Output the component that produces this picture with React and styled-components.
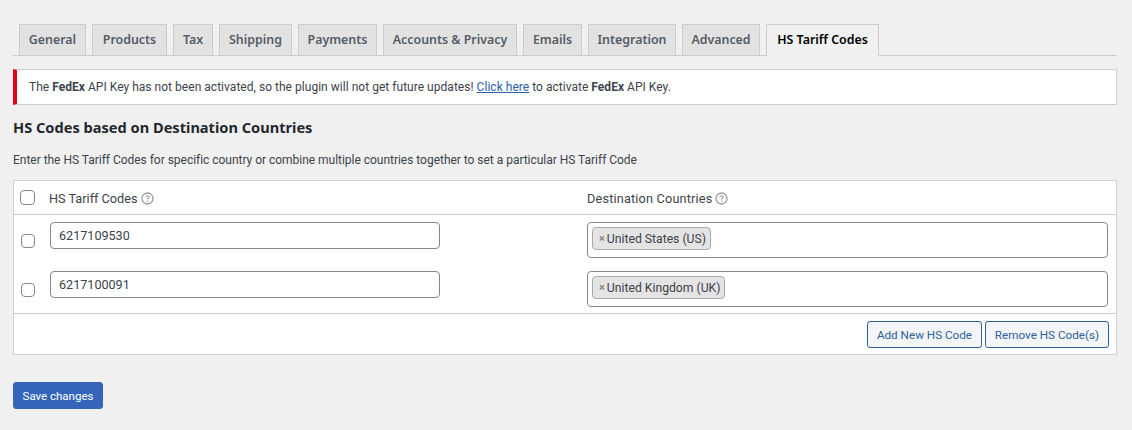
import React from 'react';
import styled, { createGlobalStyle } from 'styled-components';

const GlobalStyle = createGlobalStyle`
  html, body {
    margin: 0;
    background: #f0f0f1;
    color: #3c434a;
    font-family: Roboto, "Noto Sans", sans-serif;
    font-size: 12px;
  }
`;

const Page = styled.div`
  width: 1132px;
  height: 430px;
  box-sizing: border-box;
  padding: 24px 15px 0 13px;
  overflow: hidden;
`;

const TabBar = styled.div`
  display: flex;
  gap: 6px;
  height: 32px;
  box-sizing: border-box;
  padding-left: 6px;
  border-bottom: 1px solid #ccc;
`;

const Tab = styled.a`
  box-sizing: border-box;
  width: ${p => p.$width}px;
  height: ${p => (p.$active ? 32 : 31)}px;
  padding-bottom: ${p => (p.$active ? 2 : 1)}px;
  display: flex;
  align-items: center;
  justify-content: center;
  border: 1px solid #ccc;
  border-bottom: 0;
  background: ${p => (p.$active ? '#f0f0f1' : '#e2e2e2')};
  color: ${p => (p.$active ? '#000' : '#555d66')};
  font-family: "Noto Sans", sans-serif;
  font-size: 12.4px;
  font-weight: 600;
  white-space: nowrap;
`;

const Notice = styled.div`
  box-sizing: border-box;
  height: 36px;
  margin-top: 13px;
  padding-left: 12px;
  display: flex;
  align-items: center;
  background: #fff;
  border: 1px solid #ccd0d4;
  border-left: 4px solid #e2001a;
  color: #3c434a;
  font-size: 12px;
  letter-spacing: 0.03px;
  white-space: pre;
`;

const Link = styled.a`
  color: #2b62ae;
  text-decoration: underline;
`;

const Heading = styled.h2`
  margin: 12px 0 0;
  color: #23282d;
  font-family: "Noto Sans", sans-serif;
  font-size: 14.6px;
  line-height: 20px;
  font-weight: 700;
`;

const Intro = styled.p`
  margin: 13px 0 0;
  font-size: 12px;
  line-height: 20px;
  letter-spacing: -0.025px;
`;

const Panel = styled.div`
  margin-top: 10px;
  height: 175px;
  box-sizing: border-box;
  background: #fff;
  border: 1px solid #ccd0d4;
`;

const HeaderRow = styled.div`
  display: grid;
  grid-template-columns: 35px 538px 1fr;
  height: 34px;
  box-sizing: border-box;
  align-items: center;
  border-bottom: 1px solid #ccd0d4;
`;

const Row = styled.div`
  display: grid;
  grid-template-columns: 36px 537px 1fr;
  box-sizing: border-box;
  height: ${p => (p.$first ? 56 : 42)}px;
  padding-top: ${p => (p.$first ? 7 : 0)}px;
`;

const Check = styled.input.attrs({ type: 'checkbox' })`
  appearance: none;
  margin: ${p => (p.$head ? '0 0 0 6px' : '12px 0 0 7px')};
  width: ${p => (p.$head ? 15 : 14)}px;
  height: ${p => (p.$head ? 15 : 14)}px;
  background: #fff;
  border: 1px solid #7e8993;
  border-radius: 4px;
`;

const ColumnTitle = styled.div`
  display: flex;
  align-items: center;
  gap: 3px;
  color: #3c434a;
  font-size: 12.7px;
  letter-spacing: ${p => (p.$wide ? 0.18 : 0)}px;
  padding-top: 2px;
`;

const TextInput = styled.input`
  box-sizing: border-box;
  display: block;
  width: 390px;
  height: 27px;
  padding: 0 8px;
  border: 1px solid #7e8993;
  border-radius: 4px;
  background: #fff;
  color: #3c434a;
  font: 12.6px Roboto, sans-serif;
`;

const MultiSelect = styled.div`
  box-sizing: border-box;
  width: 521px;
  height: 36px;
  padding: 4px;
  border: 1px solid #7e8993;
  border-radius: 4px;
  background: #fff;
`;

const Chip = styled.span`
  box-sizing: border-box;
  display: inline-flex;
  align-items: center;
  gap: 2px;
  height: 23px;
  padding: 0 4px 0 6px;
  background: #e4e4e4;
  border: 1px solid #aaa;
  border-radius: 4px;
  color: #3c434a;
  font-size: 12.2px;
`;

const ChipClose = styled.span`
  color: #888;
  font-size: 11px;
  font-weight: 700;
`;

const Footer = styled.div`
  display: flex;
  justify-content: flex-end;
  gap: 3px;
  height: 41px;
  box-sizing: border-box;
  padding: 7px 7px 0 0;
  border-top: 1px solid #ccd0d4;
`;

const SecondaryButton = styled.button`
  box-sizing: border-box;
  width: ${p => p.$width}px;
  height: 27px;
  padding: 0;
  border: 1px solid #2c5f9e;
  border-radius: 3px;
  background: #f3f5f6;
  color: #2c5f9e;
  font: 11.7px Roboto, sans-serif;
`;

const SaveButton = styled.button`
  display: block;
  box-sizing: border-box;
  width: 90px;
  height: 27px;
  margin-top: 27px;
  padding: 1px 0 0;
  border: 1px solid #3465ba;
  border-radius: 3px;
  background: #3465ba;
  color: #fff;
  font: 11.5px Roboto, sans-serif;
`;

const tabs = [
  ['General', 67], ['Products', 75], ['Tax', 40], ['Shipping', 73], ['Payments', 79],
  ['Accounts & Privacy', 134], ['Emails', 59], ['Integration', 88], ['Advanced', 78],
];

const HelpIcon = () => (
  <svg width="13" height="13" viewBox="0 0 13 13" fill="none">
    <circle cx="6.5" cy="6.5" r="5.5" stroke="#999" strokeWidth="1.3" />
    <path d="M4.9 5.2c0-.9.7-1.5 1.6-1.5s1.6.6 1.6 1.4c0 1.2-1.6 1.2-1.6 2.4" stroke="#999" strokeWidth="1.1" />
    <circle cx="6.5" cy="9.3" r=".7" fill="#999" />
  </svg>
);

const rows = [
  { code: '6217109530', country: 'United States (US)' },
  { code: '6217100091', country: 'United Kingdom (UK)' },
];

export default function App() {
  return (
    <Page>
      <GlobalStyle />
      <TabBar>
        {tabs.map(([name, width]) => <Tab key={name} $width={width}>{name}</Tab>)}
        <Tab $active $width={113}>HS Tariff Codes</Tab>
      </TabBar>
      <Notice>
        The <b>FedEx</b> API Key has not been activated, so the plugin will not get future updates! <Link>Click here</Link> to activate <b>FedEx</b> API Key.
      </Notice>
      <Heading>HS Codes based on Destination Countries</Heading>
      <Intro>Enter the HS Tariff Codes for specific country or combine multiple countries together to set a particular HS Tariff Code</Intro>
      <Panel>
        <HeaderRow>
          <Check $head />
          <ColumnTitle>HS Tariff Codes <HelpIcon /></ColumnTitle>
          <ColumnTitle $wide>Destination Countries <HelpIcon /></ColumnTitle>
        </HeaderRow>
        {rows.map((row, i) => (
          <Row key={row.code} $first={i === 0}>
            <Check />
            <TextInput defaultValue={row.code} />
            <MultiSelect>
              <Chip><ChipClose>×</ChipClose>{row.country}</Chip>
            </MultiSelect>
          </Row>
        ))}
        <Footer>
          <SecondaryButton $width={115}>Add New HS Code</SecondaryButton>
          <SecondaryButton $width={124}>Remove HS Code(s)</SecondaryButton>
        </Footer>
      </Panel>
      <SaveButton>Save changes</SaveButton>
    </Page>
  );
}
